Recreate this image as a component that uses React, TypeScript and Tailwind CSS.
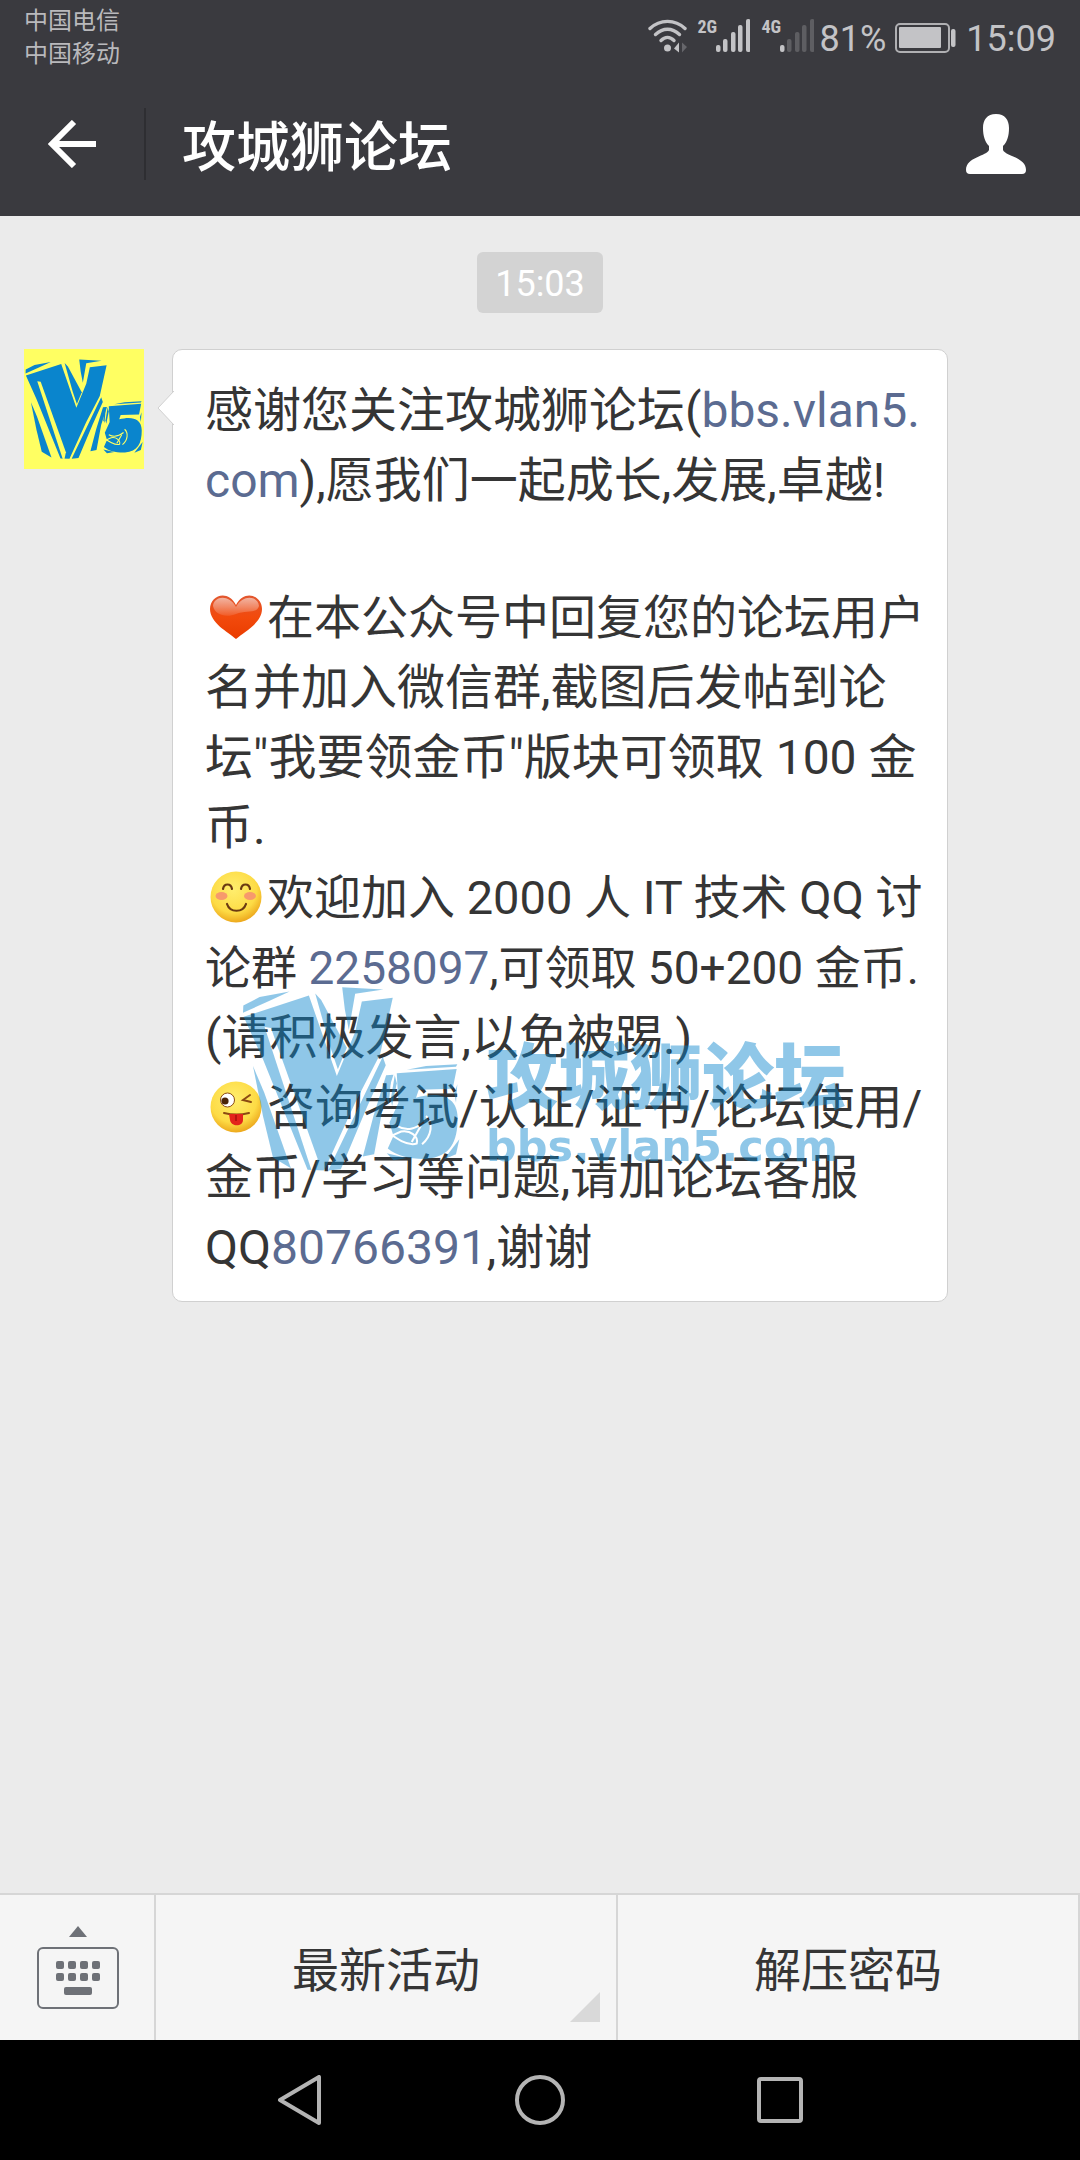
import type { ReactNode } from "react"

const CARRIERS = ["中国电信", "中国移动"]

const SIGNAL_BARS = [
  { x: 0, y: 26, height: 7 },
  { x: 7, y: 20, height: 13 },
  { x: 15, y: 13, height: 20 },
  { x: 22, y: 6, height: 27 },
  { x: 30, y: 0, height: 33 },
]

const KEY_COLUMNS = [19, 31, 43, 55]
const KEY_ROWS = [35, 47]

function Wifi() {
  return (
    <svg width="40" height="34" viewBox="0 0 40 34" fill="none" aria-hidden="true">
      <g stroke="#c3c3c6" strokeWidth="3.4" strokeLinecap="round">
        <path d="M2 9.5C12 0 27 0 37 9.5" />
        <path d="M7.500 15.500C15 8.500 24 8.500 31.500 15.500" />
        <path d="M13 21.500C17 17.500 22 17.500 26 21.500" />
      </g>
      <circle cx="19.500" cy="29" r="3.500" fill="#c3c3c6" />
      <path d="M31 23.500V33.500L26 29.500Z" fill="#c3c3c6" />
      <path d="M34 23.500V33.500L39 28Z" fill="#66666b" />
    </svg>
  )
}

function Signal({ label, level }: { label: string; level: number }) {
  return (
    <div className="flex items-start">
      <span className="w-[18px] text-center font-['Roboto_Condensed','Liberation_Sans_Narrow',Roboto,sans-serif] text-[18px] leading-[16px] font-bold text-[#c3c3c6]">
        {label}
      </span>
      <svg width="34" height="33" viewBox="0 0 34 33" aria-hidden="true">
        {SIGNAL_BARS.map((bar, i) => (
          <rect
            key={bar.x}
            x={bar.x}
            y={bar.y}
            width="4.500"
            height={bar.height}
            rx="2"
            fill={i < level ? "#c3c3c6" : "#5e5e62"}
          />
        ))}
      </svg>
    </div>
  )
}

function Battery() {
  return (
    <svg width="61" height="30" viewBox="0 0 61 30" aria-hidden="true">
      <rect x="1" y="1" width="53" height="28" rx="4" fill="none" stroke="#b0b0b3" strokeWidth="2" />
      <rect x="4" y="4" width="42" height="21" rx="1" fill="#c3c3c6" />
      <rect x="56" y="6" width="4.500" height="18" rx="2" fill="#c3c3c6" />
    </svg>
  )
}

function V5Logo({ className, id }: { className: string; id: string }) {
  return (
    <svg className={className} viewBox="65 80 655 555" fill="#0a85cd" aria-hidden="true">
      <mask id={id} maskUnits="userSpaceOnUse" x="60" y="70" width="670" height="580">
        <rect x="60" y="70" width="670" height="580" fill="#fff" />
        <path d="M133 203L152 206L292 598L284 636L274 634Z" fill="#000" />
        <g fill="none" stroke="#000" strokeWidth="6">
          <path d="M498 515C525 535 560 562 590 553C596 530 570 512 543 517L500 536" />
          <path d="M530 500C565 520 590 505 612 488M618 470C640 490 636 530 606 555" />
          <path d="M575 548L602 500" />
        </g>
      </mask>
      <g mask={`url(#${id})`}>
        {/* V */}
        <path d="M68 160L69 138L118 113L208 96L148 124Z" />
        <path d="M70 172L266 108L350 350L405 218L425 126L518 115L480 285L405 430L312 634L262 632L128 300Z" />
        <path d="M285 102L303 122L380 265L353 330L330 262Z" />
        <path d="M366 83L490 90L405 103L386 212L374 150Z" />
        <path d="M98 320L132 400L212 627L158 595L128 470Z" />
        <path d="M488 292L497 318L440 445L362 630L324 634L405 465Z" />
        <path d="M498 348L520 346L488 445L462 585L428 592L460 470Z" />
        {/* 5 */}
        <path d="M560 331L618 320L712 315L708 322Z" />
        <path d="M530 342L710 329L698 388L596 391L588 415C650 397 712 405 713 475C713 550 690 593 620 599C566 600 530 590 503 568L520 530L508 490L535 430Z" />
        <path d="M506 350L514 346L506 435L500 420Z" />
        <path d="M524 348L530 372L516 440L512 420Z" />
        <path d="M712 375L708 430L703 402Z" />
        <path d="M718 540L708 585L672 600Z" />
        <path d="M500 582L560 596L520 603Z" />
      </g>
    </svg>
  )
}

function Heart() {
  return (
    <svg className="mx-[5px] inline-block size-[52px] align-[-9px]" viewBox="0 0 52 52" role="img" aria-label="爱心">
      <defs>
        <linearGradient id="heart-body" x1="0" y1="0" x2="0" y2="1">
          <stop offset="0" stopColor="#e2572f" />
          <stop offset="0.500" stopColor="#f24a0c" />
          <stop offset="1" stopColor="#ea3c00" />
        </linearGradient>
        <linearGradient id="heart-shine" x1="0" y1="0" x2="0" y2="1">
          <stop offset="0" stopColor="#fff" stopOpacity="0.550" />
          <stop offset="1" stopColor="#fff" stopOpacity="0.100" />
        </linearGradient>
      </defs>
      <path
        d="M26 48C18 41 0 32 0 18C0 4 18 -2 26 14C34 -2 52 4 52 18C52 32 34 41 26 48Z"
        fill="url(#heart-body)"
      />
      <path d="M3 15C4 5 19 3 26 16C33 3 48 5 49 15C47 23 36 19 26 23C16 27 5 24 3 15Z" fill="url(#heart-shine)" />
    </svg>
  )
}

function Face({ id, label, children }: { id: string; label: string; children: ReactNode }) {
  return (
    <svg className="mx-[5px] inline-block size-[52px] align-[-9px]" viewBox="0 0 52 52" role="img" aria-label={label}>
      <radialGradient id={id} cx="0.450" cy="0.350" r="0.650">
        <stop offset="0" stopColor="#ffee6e" />
        <stop offset="0.700" stopColor="#fddb45" />
        <stop offset="1" stopColor="#eda91d" />
      </radialGradient>
      <circle cx="26" cy="26" r="25.500" fill={`url(#${id})`} />
      {children}
    </svg>
  )
}

function Smile() {
  return (
    <Face id="smile-skin" label="微笑">
      <ellipse cx="11.500" cy="25" rx="6" ry="4" fill="#f79a6c" />
      <ellipse cx="40" cy="25" rx="6" ry="4" fill="#f79a6c" />
      <g fill="none" stroke="#6b3a12" strokeWidth="2.200" strokeLinecap="round">
        <path d="M13 18C14 12 21 12 22 18" />
        <path d="M31 18C32 12 39 12 40 18" />
        <path d="M17 33C20 42 33 42 36 33" />
      </g>
    </Face>
  )
}

function Wink() {
  return (
    <Face id="wink-skin" label="调皮">
      <circle cx="17.500" cy="19" r="7" fill="#fff" stroke="#8a4a12" strokeWidth="1" />
      <circle cx="15" cy="20" r="3.600" fill="#4a2408" />
      <g fill="none" stroke="#8a4a12" strokeWidth="2" strokeLinecap="round">
        <path d="M40 14L33 19L41 21" />
        <path d="M14 32C22 34 31 34 39 32" />
      </g>
      <path d="M19 33H33V39C33 46 21 46 20 39Z" fill="#e3231b" />
      <path d="M26 34V40" stroke="#a80f0f" strokeWidth="1.500" />
    </Face>
  )
}

function TextLink({ href, children }: { href: string; children: ReactNode }) {
  return (
    <a href={href} className="text-[#5b6b91]">
      {children}
    </a>
  )
}

function StatusBar() {
  return (
    <div className="flex h-[72px] items-start justify-between px-6">
      <div className="pt-[5px] text-[24px] leading-[33px] text-[#b9b9bc]">
        {CARRIERS.map((name) => (
          <p key={name}>{name}</p>
        ))}
      </div>
      <div className="flex items-start pt-[19px] text-[36px] leading-[40px] text-[#c3c3c6]">
        <Wifi />
        <div className="ml-[10px] flex gap-3">
          <Signal label="2G" level={5} />
          <Signal label="4G" level={1} />
        </div>
        <span className="ml-[6px]">81%</span>
        <div className="mr-[10px] ml-[9px] pt-1">
          <Battery />
        </div>
        <span>15:09</span>
      </div>
    </div>
  )
}

function TitleBar() {
  return (
    <div className="flex h-36 items-center text-white">
      <button className="flex h-18 w-[146px] items-center justify-center border-r-2 border-[#2e2e32]" aria-label="返回">
        <svg width="48" height="48" viewBox="0 0 48 48" fill="none" stroke="#fff" strokeWidth="6" aria-hidden="true">
          <path d="M26 2L4 24L26 46M4 24H48" />
        </svg>
      </button>
      <h1 className="flex-1 pt-2.5 pl-9 text-[54px] leading-[72px] font-medium">攻城狮论坛</h1>
      <button className="mr-[53px]" aria-label="公众号资料">
        <svg width="62" height="60" viewBox="0 0 62 60" fill="#fff" aria-hidden="true">
          <path d="M31 0C40 0 44 6 44 14C44 22 42 28 38 32V36C40 42 61 43 61 56Q61 60 57 60H5Q1 60 1 56C1 43 22 42 24 36V32C20 28 18 22 18 14C18 6 22 0 31 0Z" />
        </svg>
      </button>
    </div>
  )
}

function Watermark() {
  return (
    <div className="pointer-events-none absolute top-[636px] left-[69px] flex items-start gap-[26px] whitespace-nowrap opacity-45">
      <V5Logo id="watermark-cut" className="h-[185px] w-[218px]" />
      <div className="pt-12 text-[#0a85cd]">
        <p className="text-[72px] leading-[90px] font-black">攻城狮论坛</p>
        <p className="font-['DejaVu_Sans',sans-serif] text-[43px] leading-[44px] font-bold">bbs.vlan5.com</p>
      </div>
    </div>
  )
}

function Message() {
  return (
    <div className="flex items-start gap-7 px-6">
      <div className="flex size-[120px] shrink-0 items-center justify-center bg-[#ffff62]">
        <V5Logo id="avatar-cut" className="h-[100px] w-[118px]" />
      </div>
      <div className="relative max-w-[776px] flex-1 rounded-[10px] border border-[#d0d0d0] bg-white px-8 pt-[26px] pb-[18px] text-[48px] leading-[70px] whitespace-nowrap text-[#353535]">
        <svg className="absolute top-10 -left-4" width="17" height="36" viewBox="0 0 17 36" aria-hidden="true">
          <path d="M17 1L1 18L17 35" fill="#fff" stroke="#d0d0d0" />
        </svg>
        <p className="mb-[67px]">
          感谢您关注攻城狮论坛(<TextLink href="http://bbs.vlan5.com">bbs.vlan5.<br />com</TextLink>),愿我们一起成长,发展,卓越!
        </p>
        <p>
          <span className="block text-[47px]"><Heart />在本公众号中回复您的论坛用户</span>
          名并加入微信群,截图后发帖到论<br />
          坛"我要领金币"版块可领取 100 金<br />
          币.
        </p>
        <p>
          <span className="block text-[47px]"><Smile />欢迎加入 2000 人 IT 技术 QQ 讨</span>
          <span className="block text-[46px]">
            论群 <TextLink href="#2258097">2258097</TextLink>,可领取 50+200 金币.
          </span>
        </p>
        <p>(请积极发言,以免被踢.)</p>
        <p>
          <Wink />咨询考试/认证/证书/论坛使用/<br />
          金币/学习等问题,请加论坛客服<br />
          QQ<TextLink href="#80766391">80766391</TextLink>,谢谢
        </p>
        <Watermark />
      </div>
    </div>
  )
}

function MenuBar() {
  return (
    <footer className="flex h-[147px] border-t-2 border-[#d6d6d6] bg-[#f5f5f5] text-[47px] text-[#353535]">
      <button className="flex w-[156px] items-center justify-center border-r-2 border-[#d6d6d6] pl-0.5" aria-label="切换键盘">
        <svg width="82" height="84" viewBox="0 0 82 84" fill="#6e7177" aria-hidden="true">
          <path d="M41 0L50 11H32Z" />
          <rect x="1" y="22" width="80" height="60" rx="5" fill="none" stroke="#6e7177" strokeWidth="2" />
          {KEY_ROWS.map((y) => KEY_COLUMNS.map((x) => <rect key={`${x}-${y}`} x={x} y={y} width="8" height="8" rx="2" />))}
          <rect x="27" y="61" width="28" height="8" rx="2" />
        </svg>
      </button>
      <button className="relative flex-1 border-r-2 border-[#d6d6d6] pt-2">
        最新活动
        <svg className="absolute right-4 bottom-[18px]" width="30" height="30" viewBox="0 0 30 30" aria-hidden="true">
          <path d="M30 0V30H0Z" fill="#d9d9d9" />
        </svg>
      </button>
      <button className="flex-1 border-r-2 border-[#d6d6d6] pt-2">解压密码</button>
    </footer>
  )
}

function NavigationBar() {
  return (
    <nav className="flex h-[120px] items-center justify-center bg-black">
      <button className="flex w-60 justify-center" aria-label="返回">
        <svg width="50" height="50" viewBox="0 0 50 50" fill="none" stroke="#b4b4b4" strokeWidth="4" strokeLinejoin="round" aria-hidden="true">
          <path d="M44 2V48L5 25Z" />
        </svg>
      </button>
      <button className="flex w-60 justify-center" aria-label="主页">
        <svg width="50" height="50" viewBox="0 0 50 50" fill="none" stroke="#b4b4b4" strokeWidth="4" aria-hidden="true">
          <circle cx="25" cy="25" r="23" />
        </svg>
      </button>
      <button className="flex w-60 justify-center" aria-label="最近任务">
        <svg width="50" height="50" viewBox="0 0 50 50" fill="none" stroke="#b4b4b4" strokeWidth="4" aria-hidden="true">
          <rect x="4" y="4" width="42" height="42" rx="2" />
        </svg>
      </button>
    </nav>
  )
}

export default function App() {
  return (
    <div className="flex min-h-screen flex-col bg-[#ebebeb] font-[Roboto,'Noto_Sans_CJK_SC',sans-serif]">
      <header className="bg-[#3a3a3f]">
        <StatusBar />
        <TitleBar />
      </header>
      <main className="flex-1 pt-9">
        <div className="mb-9 flex justify-center">
          <time className="rounded-md bg-[#d3d3d3] px-[18px] pt-1 text-[36px] leading-[57px] text-white">15:03</time>
        </div>
        <Message />
      </main>
      <MenuBar />
      <NavigationBar />
    </div>
  )
}
